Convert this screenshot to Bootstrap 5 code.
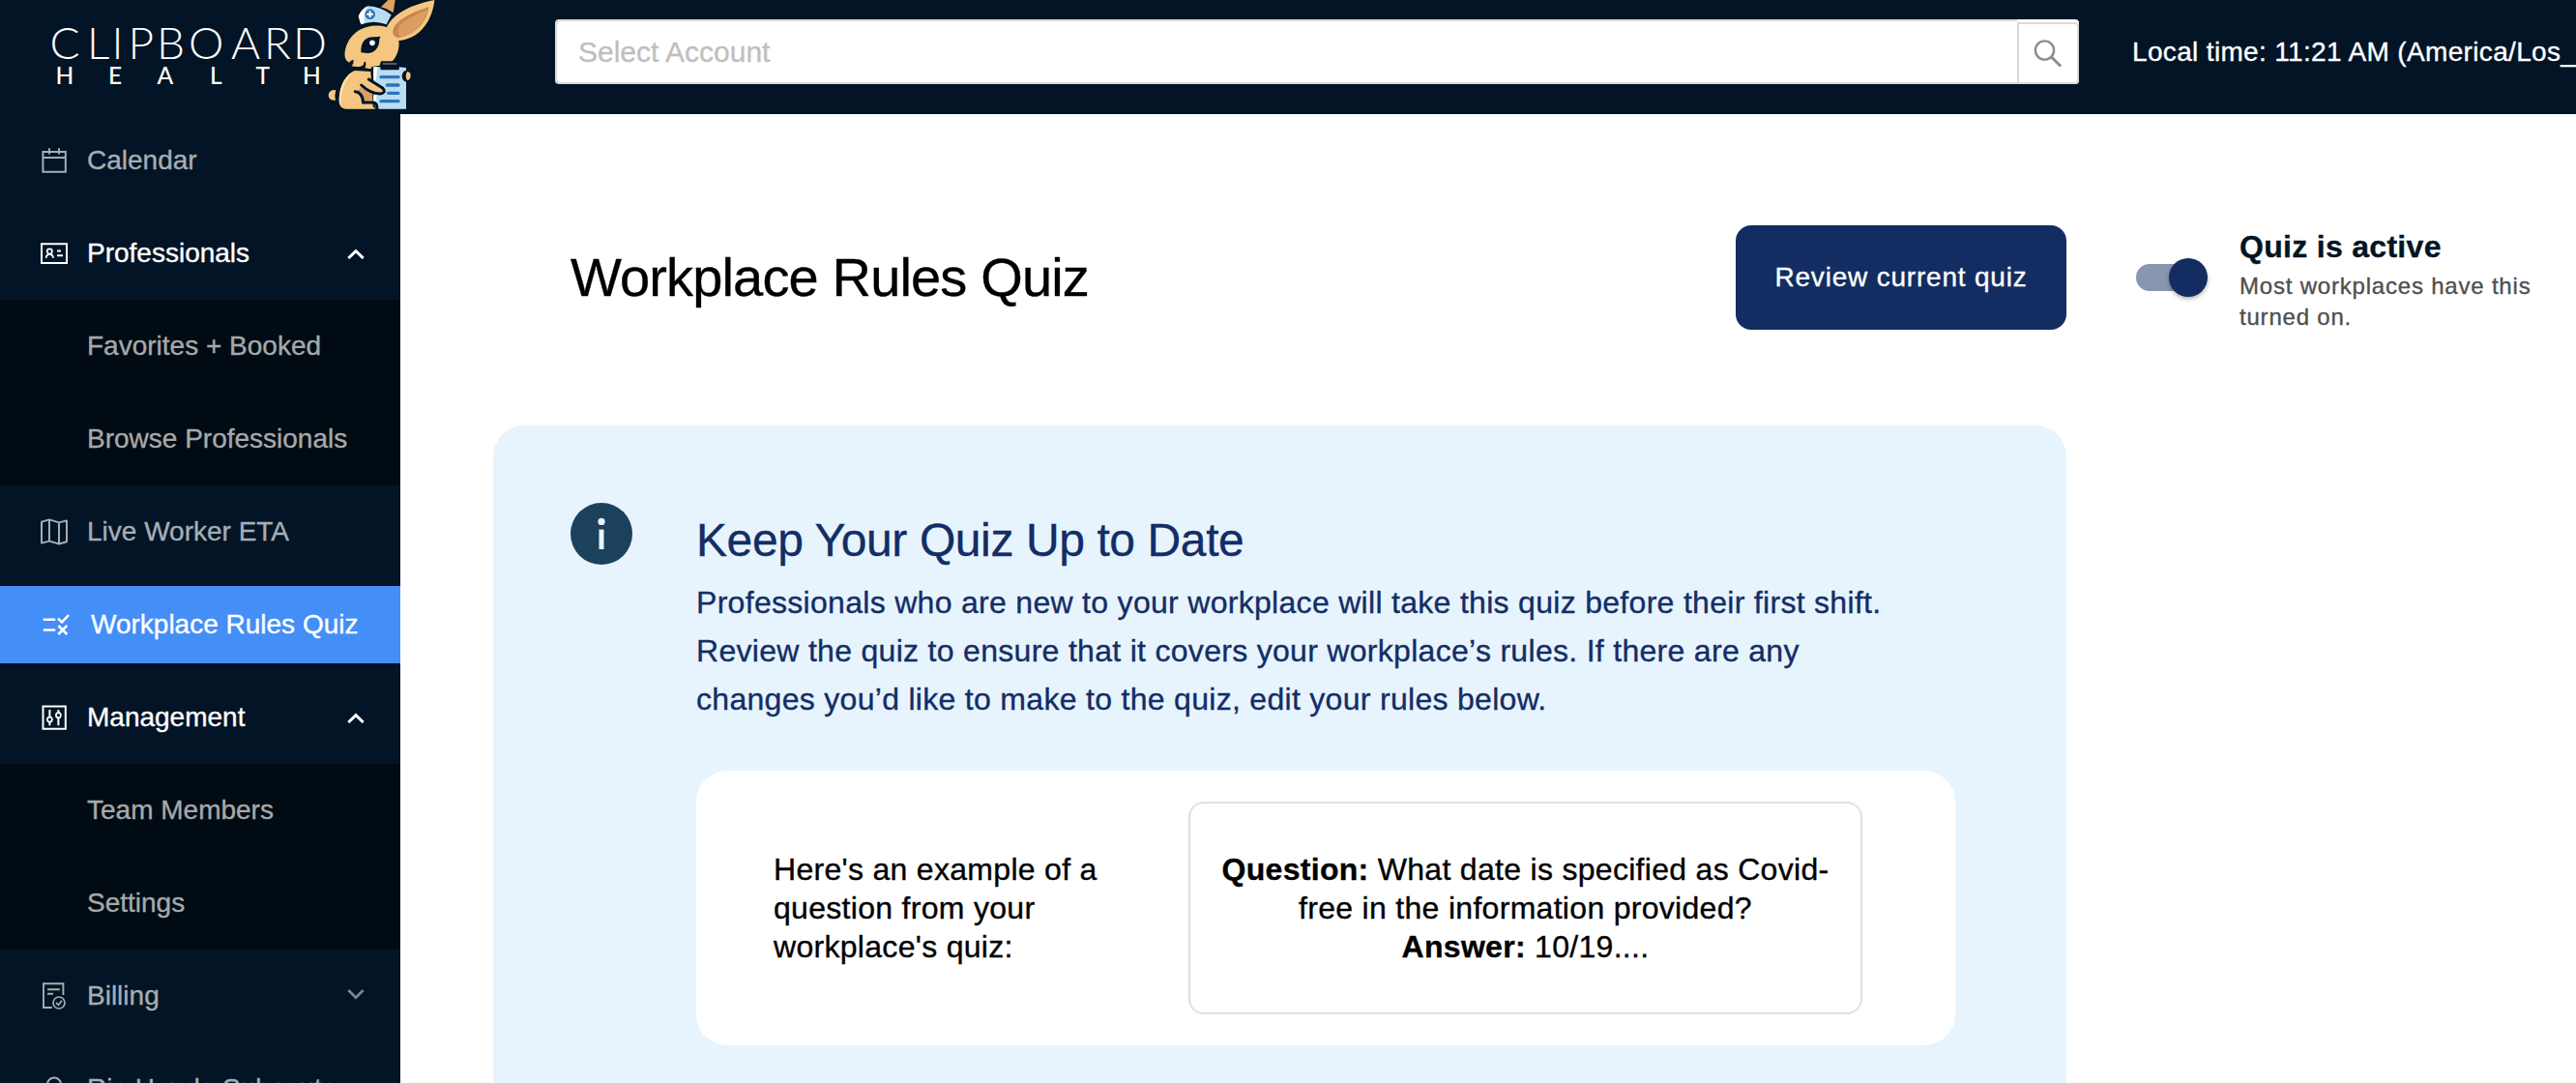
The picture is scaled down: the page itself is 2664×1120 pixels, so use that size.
<!DOCTYPE html>
<html lang="en">
<head>
  <meta charset="UTF-8" />
  <title>Workplace Rules Quiz</title>
  <meta name="viewport" content="width=device-width, initial-scale=1.0" />
  <link
    rel="stylesheet"
    href="https://cdn.jsdelivr.net/npm/bootstrap@5.3.0/dist/css/bootstrap.min.css"
  />

  <style>
    body {
      font-family: "Liberation Sans", Arial, sans-serif;
      font-size: 28px;
      color: #000;
      -webkit-text-stroke: 0.35px currentColor;
    }
    .app-shell {
      height: 100vh;
    }
    /* Top bar */
    .top-bar {
      height: 118px;
      background: #021425;
    }
    .logo-art {
      width: 574px;
      height: 118px;
      -webkit-text-stroke: 0;
    }
    .account-search {
      width: 1576px;
      height: 67px;
      margin-top: 20px;
    }
    .account-search .form-control {
      border: 2px solid #d9d9d9;
      border-right: 0;
      border-radius: 4px 0 0 4px;
      padding: 0 22px;
      font-size: 30px;
      letter-spacing: 0;
    }
    .account-search .form-control::placeholder {
      color: #bfbfbf;
      opacity: 1;
    }
    .search-btn {
      width: 64px;
      padding: 2px 0 0;
      border: 0;
      border-radius: 0 4px 4px 0;
      background: #fff;
    }
    .search-btn-inner {
      height: 64px;
      border: 2px solid #d9d9d9;
      border-radius: 0 4px 4px 0;
    }
    .local-time {
      height: 67px;
      margin-top: 20px;
      margin-left: 55px;
      letter-spacing: 0.34px;
    }
    /* Side menu */
    .side-menu {
      width: 414px;
      background: #021425;
    }
    .menu-row {
      height: 96px;
      padding-left: 40px;
      padding-right: 36px;
      color: #a6adb4;
      white-space: nowrap;
    }
    .menu-row .menu-icon {
      width: 32px;
      height: 32px;
      margin-right: 18px;
    }
    .menu-row.is-open {
      color: #fff;
    }
    .menu-row.is-active {
      height: 80px;
      margin: 8px 0;
      background: #448ef7;
      color: #fff;
    }
    .menu-row.is-active .menu-icon {
      margin-right: 22px;
    }
    .sub-menu {
      background: #010b13;
    }
    .sub-menu .menu-row {
      padding-left: 90px;
      color: #a6a9ab;
    }
    /* Quiz page */
    .quiz-page {
      padding: 115px 0 0 96px;
    }
    .quiz-col {
      width: 1627px;
    }
    .title-row {
      height: 108px;
      padding-left: 80px;
      margin-bottom: 99px;
    }
    .title-row h1 {
      font-size: 56px;
      font-weight: 400;
      letter-spacing: -0.85px;
    }
    .btn-review,
    .btn-review:hover {
      width: 342px;
      height: 108px;
      border: 0;
      border-radius: 16px;
      background: #132d62;
      color: #fff;
      font-size: 28px;
      letter-spacing: 0.8px;
    }
    .toggle-row {
      height: 108px;
      margin-left: 72px;
      gap: 33px;
    }
    .toggle-thumb {
      filter: drop-shadow(0 2px 2px rgba(0, 0, 0, 0.3));
    }
    .toggle-title {
      font-size: 32px;
      line-height: 50px;
      letter-spacing: 0.3px;
      color: #021425;
    }
    .toggle-note {
      font-size: 24px;
      line-height: 32px;
      letter-spacing: 0.8px;
      color: #4f4f4f;
    }
    .info-panel {
      padding: 80px 80px 0;
      border-radius: 32px 32px 0 0;
      background: #e7f4fd;
    }
    .info-body {
      width: 1302px;
      margin-left: 66px;
      padding-top: 10px;
      color: #132d66;
    }
    .info-body h2 {
      font-size: 48px;
      font-weight: 400;
      line-height: 58px;
      letter-spacing: -0.4px;
      margin-bottom: 10px;
    }
    .info-text {
      max-width: 1242px;
      font-size: 32px;
      line-height: 50px;
      letter-spacing: 0.3px;
      margin-bottom: 49px;
    }
    .example-card {
      height: 284px;
      padding: 32px 96px 32px 80px;
      border-radius: 32px;
      color: #000;
      font-size: 32px;
      line-height: 40px;
      letter-spacing: 0.3px;
    }
    .example-label {
      width: 360px;
    }
    .example-box {
      width: 697px;
      height: 220px;
      padding: 0 24px;
      border: 2px solid #e0e0e0;
      border-radius: 16px;
    }
  </style>
</head>
<body>
  <div class="app-shell d-flex flex-column overflow-hidden">

    <!-- Top bar -->
    <header class="top-bar d-flex align-items-start flex-shrink-0 overflow-hidden">
      <svg class="logo-art flex-shrink-0" viewBox="0 0 574 118">
        <g fill="#fff" font-family="Lato, sans-serif">
          <text font-size="46" font-weight="300" y="61" x="51.5 90 115.5 132.5 162 195 239 273 303">CLIPBOARD</text>
          <text font-size="24.5" font-weight="500" y="87" x="57.5 112 162.5 217 264.5 313">HEALTH</text>
        </g>
        <!-- Rabbit -->
        <g transform="translate(320 0) scale(.33333)">
          <path fill="#dfa25f" d="M222 22L250 -6L266 0L260 39Q243 27 222 22Z" />
          <path fill="#b9def1" d="M152 50Q163 26 182 19Q222 20 254 46L239 76Q200 60 160 76Z" />
          <path fill="#fff" d="M152 50Q163 26 182 19Q166 40 170 72L160 76Z" />
          <circle cx="188" cy="44" r="16" fill="#2f72be" />
          <path stroke="#fff" stroke-width="6" d="M188 34V54M178 44H198" />
          <path fill="#f4c680" d="M240 84C262 38 325 12 388 0C384 50 352 118 280 126L277 125C281 150 271 176 257 190H222L218 203L194 207L190 214L172 211Q178 202 174 191Q168 190 168 200Q160 211 130 205Q139 196 136 185Q126 188 124 194C105 188 107 160 117 136C137 90 190 70 240 84Z" />
          <path fill="#c58752" d="M275 117C250 112 254 82 286 60Q322 36 370 22C366 62 332 110 275 117Z" />
          <path fill="#dc9e60" d="M284 114C265 100 276 76 304 60Q336 41 366 31C358 66 328 108 284 114Z" />
          <path fill="#021425" d="M160 163C158 124 180 113 202 115L221 113L217 121C218 150 200 166 180 165Z" />
          <circle cx="195" cy="133" r="8.5" fill="#fff" />
          <path fill="#f4c680" d="M82 279Q59 278 59 296Q60 312 81 311Q77 296 82 279Z" />
          <path fill="#f4c680" d="M112 338Q90 337 92 307C94 260 115 231 141 219L190 222L197 330L205 338Z" />
          <path fill="#fce1af" d="M98 328Q91 320 92 307C94 260 115 231 141 219C116 240 97 275 98 328Z" />
          <path fill="#dc9e60" d="M144 283Q166 272 161 264L196 285V314H169Z" />
          <path fill="#b9def1" d="M199 208H221V217H277V208L300 210V338H207L199 318Z" />
          <path fill="#fff" d="M199 208H211L206 250L199 250ZM199 296L208 294V325L199 318Z" />
          <path fill="#021425" d="M221 202Q221 194 230 194H270Q278 195 278 206V216H221Z" />
          <path stroke="#a9a39b" stroke-width="3" d="M227 198H271" />
          <path stroke="#2f72be" stroke-width="10" stroke-linecap="round" d="M222 239H276M241 264H276M245 289H276M222 314H276" />
          <path fill="none" stroke="#021425" stroke-width="9" stroke-linecap="round" d="M142 284Q164 286 167 318H198Q211 320 210 338" />
          <path fill="#f4c680" d="M187 244L229 273Q237 290 218 291Q190 291 161 263Z" />
          <path fill="none" stroke="#021425" stroke-width="9" stroke-linecap="round" stroke-linejoin="round" d="M184 246L228 274Q239 288 219 291Q190 291 161 264" />
          <ellipse cx="302" cy="236" rx="15" ry="18" fill="#021425" />
          <path fill="#f4c680" d="M303 222Q315 223 314 236Q313 248 303 249Q296 236 303 222Z" />
        </g>
      </svg>

      <div class="account-search d-flex flex-shrink-0">
        <input type="text" class="form-control" placeholder="Select Account" />
        <button type="button" class="search-btn flex-shrink-0">
          <span class="search-btn-inner d-flex align-items-center justify-content-center">
            <svg width="30" height="30" viewBox="0 0 30 30" fill="none" stroke="#8c8c8c" stroke-width="2.4">
              <circle cx="11.5" cy="12" r="9.6" />
              <path d="M18.3 18.8L28.1 28.6" stroke-width="2.8" />
            </svg>
          </span>
        </button>
      </div>
      <div class="local-time d-flex align-items-center text-white text-nowrap">Local time: 11:21 AM (America/Los_Angeles)</div>
    </header>

    <div class="d-flex flex-grow-1 overflow-hidden">

      <!-- Side menu -->
      <nav class="side-menu flex-shrink-0 overflow-hidden">
        <div class="menu-row d-flex align-items-center">
          <svg class="menu-icon" viewBox="0 0 32 32" fill="none" stroke="currentColor" stroke-width="2">
            <path d="M4.4 7H27.8V27.8H4.4ZM4.4 13H27.8M11 3.2V9.4M21 3.2V9.4" />
          </svg>
          Calendar
        </div>
        <div class="menu-row is-open d-flex align-items-center">
          <svg class="menu-icon" viewBox="0 0 32 32" fill="none" stroke="currentColor" stroke-width="2">
            <path d="M3 6.2H29V26H3ZM19 13.5H23M19 18.3H25" />
            <circle cx="11.3" cy="14" r="2.6" stroke-width="1.7" />
            <path d="M7.6 20.8Q8 17 11.3 16.8Q14.7 17 15.1 20.8" stroke-width="1.7" />
          </svg>
          Professionals
          <svg class="ms-auto" width="20" height="12" viewBox="0 0 20 12" fill="none" stroke="currentColor" stroke-width="3">
            <path d="M2.3 11L10 3.6L17.7 11" />
          </svg>
        </div>
        <div class="sub-menu">
          <div class="menu-row d-flex align-items-center">Favorites + Booked</div>
          <div class="menu-row d-flex align-items-center">Browse Professionals</div>
        </div>
        <div class="menu-row d-flex align-items-center">
          <svg class="menu-icon" viewBox="0 0 32 32" fill="none" stroke="currentColor" stroke-width="2" stroke-linejoin="round">
            <path d="M3 5.6L11 3.4L21 6.4L29 4.4V26.2L21 28.5L11 25.6L3 27.6ZM11 3.4V25.6M21 6.4V28.5" />
          </svg>
          Live Worker ETA
        </div>
        <div class="menu-row is-active d-flex align-items-center">
          <svg class="menu-icon" viewBox="0 0 32 32" fill="none" stroke="currentColor" stroke-width="2.5">
            <path d="M4.7 10.7H17.3M4.7 21.4H17.3M20 9.6L24 13.4L31 6.2M20.3 17L29.3 26M29.3 17L20.3 26" />
          </svg>
          Workplace Rules Quiz
        </div>
        <div class="menu-row is-open d-flex align-items-center">
          <svg class="menu-icon" viewBox="0 0 32 32" fill="none" stroke="currentColor" stroke-width="2">
            <path d="M4.5 4.4H27.8V27.8H4.5ZM11.4 8V15.6M11.4 20.6V24.3M20.4 8V11.2M20.4 16.2V24.3" />
            <circle cx="11.4" cy="18.1" r="2.5" stroke-width="1.7" />
            <circle cx="20.4" cy="13.7" r="2.5" stroke-width="1.7" />
          </svg>
          Management
          <svg class="ms-auto" width="20" height="12" viewBox="0 0 20 12" fill="none" stroke="currentColor" stroke-width="3">
            <path d="M2.3 11L10 3.6L17.7 11" />
          </svg>
        </div>
        <div class="sub-menu">
          <div class="menu-row d-flex align-items-center">Team Members</div>
          <div class="menu-row d-flex align-items-center">Settings</div>
        </div>
        <div class="menu-row d-flex align-items-center">
          <svg class="menu-icon" viewBox="0 0 32 32" fill="none" stroke="currentColor" stroke-width="1.9">
            <path d="M13.8 28H5V3.2H25.4V15M9 9.2H21.8M9 13.8H15" />
            <circle cx="21" cy="23" r="6" stroke-width="1.7" />
            <path d="M18 23L20.4 25.2L24 20.8" stroke-width="1.7" />
          </svg>
          Billing
          <svg class="ms-auto mb-1" width="20" height="12" viewBox="0 0 20 12" fill="none" stroke="#80878f" stroke-width="2.7">
            <path d="M2.3 2L10 9.6L17.7 2" />
          </svg>
        </div>
        <div class="menu-row d-flex align-items-center">
          <svg class="menu-icon" viewBox="0 0 32 32" fill="none" stroke="currentColor" stroke-width="2">
            <circle cx="16" cy="11.4" r="7" />
            <path d="M4 29Q6 19 16 19Q26 19 28 29" />
          </svg>
          Rio Hondo Subacute
        </div>
      </nav>

      <!-- Quiz page -->
      <main class="quiz-page d-flex flex-grow-1 bg-white overflow-hidden">
        <div class="quiz-col d-flex flex-column flex-shrink-0">
          <div class="title-row d-flex align-items-center justify-content-between flex-shrink-0">
            <h1 class="mb-0">Workplace Rules Quiz</h1>
            <button type="button" class="btn btn-review">Review current quiz</button>
          </div>

          <section class="info-panel d-flex align-items-start flex-grow-1">
            <svg class="flex-shrink-0" width="64" height="64" viewBox="0 0 64 64">
              <circle cx="32" cy="32" r="32" fill="#1b415d" />
              <circle cx="32" cy="19.4" r="3.6" fill="#e7f4fd" />
              <path d="M32 27.6V48" stroke="#e7f4fd" stroke-width="5" />
            </svg>
            <div class="info-body flex-shrink-0">
              <h2>Keep Your Quiz Up to Date</h2>
              <p class="info-text">
                Professionals who are new to your workplace will take this quiz before their first shift.
                Review the quiz to ensure that it covers your workplace’s rules. If there are any
                changes you’d like to make to the quiz, edit your rules below.
              </p>
              <div class="example-card bg-white d-flex align-items-center justify-content-between">
                <div class="example-label">Here's an example of a question from your workplace's quiz:</div>
                <div class="example-box d-flex flex-column justify-content-center text-center">
                  <div><strong>Question:</strong> What date is specified as Covid-free in the information provided?</div>
                  <div><strong>Answer:</strong> 10/19....</div>
                </div>
              </div>
            </div>
          </section>
        </div>

        <div class="toggle-row d-flex align-items-center">
          <svg class="flex-shrink-0 overflow-visible" width="74" height="40" viewBox="0 0 74 40">
            <rect x="0" y="6" width="68" height="28" rx="14" fill="#8896b1" />
            <circle class="toggle-thumb" cx="54" cy="20" r="20" fill="#132d62" />
          </svg>
          <div>
            <div class="toggle-title fw-bold">Quiz is active</div>
            <div class="toggle-note">Most workplaces have this turned on.</div>
          </div>
        </div>
      </main>
    </div>
  </div>

  <script src="https://cdn.jsdelivr.net/npm/bootstrap@5.3.0/dist/js/bootstrap.bundle.min.js"></script>
</body>
</html>
